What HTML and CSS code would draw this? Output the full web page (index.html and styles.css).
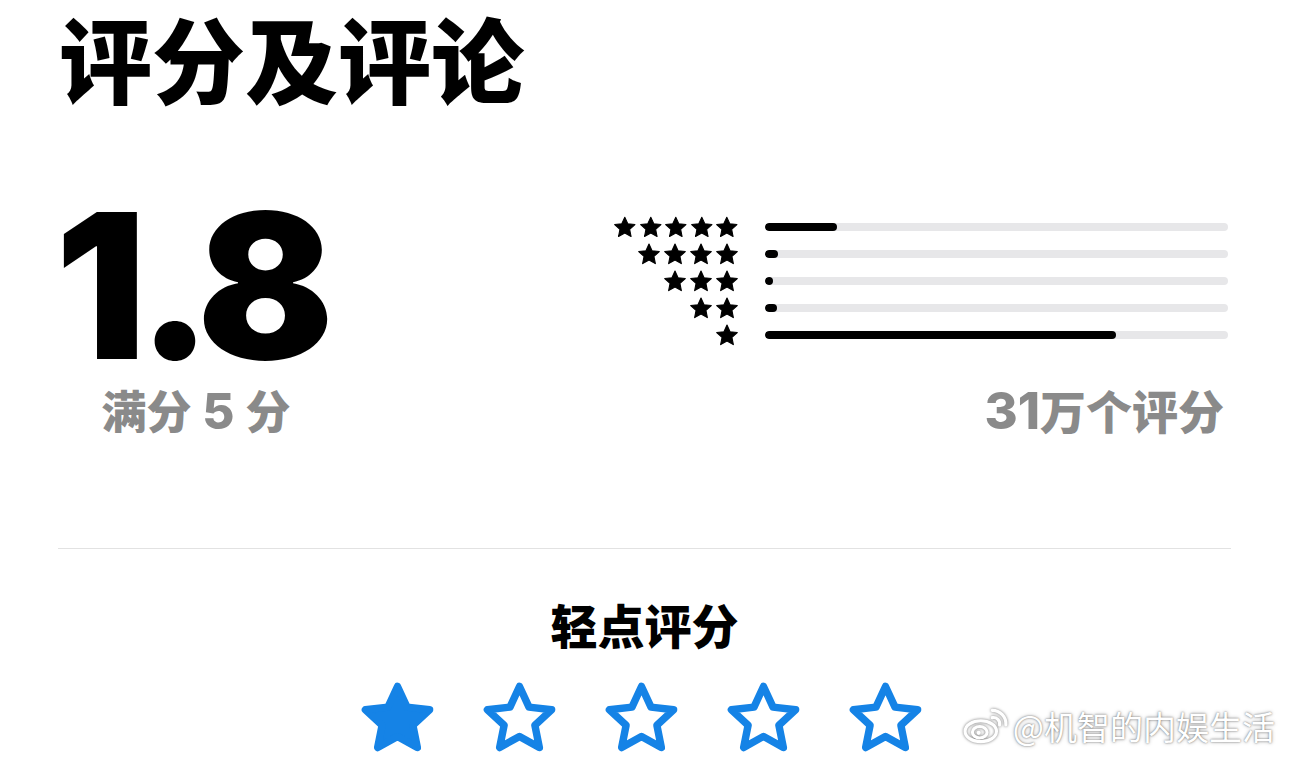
FILE: index.html
```html
<!DOCTYPE html>
<html lang="zh-CN">
<head>
  <meta charset="UTF-8" />
  <meta name="viewport" content="width=device-width, initial-scale=1" />
  <title>评分及评论</title>
  <link rel="stylesheet" href="styles.css">
</head>
<body>
  <svg width="0" height="0" class="defs">
    <defs>
      <path id="star" d="M12 2.8 L14.82 8.92 L21.51 9.71 L16.56 14.28 L17.88 20.89 L12 17.6 L6.12 20.89 L7.44 14.28 L2.49 9.71 L9.18 8.92 Z" />
    </defs>
  </svg>

  <main class="page">
    <h1 class="title">评分及评论</h1>

    <section class="summary">
      <div class="score">
        <div class="score-value">1.8</div>
        <div class="caption">满分 <span class="num">5</span> 分</div>
      </div>

      <div class="breakdown">
        <div class="histogram">
          <div class="hist-row">
            <div class="hist-stars">
              <svg class="mini-star" viewBox="0 0 24 24"><use href="#star" /></svg>
              <svg class="mini-star" viewBox="0 0 24 24"><use href="#star" /></svg>
              <svg class="mini-star" viewBox="0 0 24 24"><use href="#star" /></svg>
              <svg class="mini-star" viewBox="0 0 24 24"><use href="#star" /></svg>
              <svg class="mini-star" viewBox="0 0 24 24"><use href="#star" /></svg>
            </div>
            <div class="bar"><div class="bar-fill" style="width: 15.6%"></div></div>
          </div>
          <div class="hist-row">
            <div class="hist-stars">
              <svg class="mini-star" viewBox="0 0 24 24"><use href="#star" /></svg>
              <svg class="mini-star" viewBox="0 0 24 24"><use href="#star" /></svg>
              <svg class="mini-star" viewBox="0 0 24 24"><use href="#star" /></svg>
              <svg class="mini-star" viewBox="0 0 24 24"><use href="#star" /></svg>
            </div>
            <div class="bar"><div class="bar-fill" style="width: 2.8%"></div></div>
          </div>
          <div class="hist-row">
            <div class="hist-stars">
              <svg class="mini-star" viewBox="0 0 24 24"><use href="#star" /></svg>
              <svg class="mini-star" viewBox="0 0 24 24"><use href="#star" /></svg>
              <svg class="mini-star" viewBox="0 0 24 24"><use href="#star" /></svg>
            </div>
            <div class="bar"><div class="bar-fill" style="width: 1.8%"></div></div>
          </div>
          <div class="hist-row">
            <div class="hist-stars">
              <svg class="mini-star" viewBox="0 0 24 24"><use href="#star" /></svg>
              <svg class="mini-star" viewBox="0 0 24 24"><use href="#star" /></svg>
            </div>
            <div class="bar"><div class="bar-fill" style="width: 2.6%"></div></div>
          </div>
          <div class="hist-row">
            <div class="hist-stars">
              <svg class="mini-star" viewBox="0 0 24 24"><use href="#star" /></svg>
            </div>
            <div class="bar"><div class="bar-fill" style="width: 75.8%"></div></div>
          </div>
        </div>
        <div class="caption count"><span class="num">31</span>万个评分</div>
      </div>
    </section>

    <hr class="divider" />

    <section class="tap-rate">
      <h2 class="tap-title">轻点评分</h2>
      <div class="rate-stars">
        <svg class="rate-star filled" viewBox="0 0 24 24"><use href="#star" /></svg>
        <svg class="rate-star" viewBox="0 0 24 24"><use href="#star" /></svg>
        <svg class="rate-star" viewBox="0 0 24 24"><use href="#star" /></svg>
        <svg class="rate-star" viewBox="0 0 24 24"><use href="#star" /></svg>
        <svg class="rate-star" viewBox="0 0 24 24"><use href="#star" /></svg>
      </div>
    </section>
  </main>

  <div class="watermark">
    <svg class="weibo" viewBox="0 0 44 36">
      <ellipse cx="17" cy="23" rx="15" ry="10" fill="none" stroke="#fff" stroke-width="3" />
      <ellipse cx="16" cy="24" rx="7" ry="5.5" fill="none" stroke="#fff" stroke-width="3" />
      <circle cx="15" cy="24.5" r="2" fill="#fff" />
      <path d="M28 10 a6 6 0 0 1 7 7" fill="none" stroke="#fff" stroke-width="3" stroke-linecap="round" />
      <path d="M28 3 a13 13 0 0 1 13 14" fill="none" stroke="#fff" stroke-width="3" stroke-linecap="round" />
    </svg>
    <span>@机智的内娱生活</span>
  </div>
</body>
</html>
```

FILE: styles.css
```css
:root {
  --text: #000;
  --muted: #8a8a8a;
  --track: #e7e7e9;
  --blue: #1583e6;
  --font-family: "Inter", "Noto Sans CJK SC", sans-serif;
}

* { box-sizing: border-box; }

body {
  margin: 0;
  background: #fff;
  color: var(--text);
  font-family: var(--font-family);
  overflow: hidden;
}

.defs { position: absolute; }

.page {
  padding: 17px 59px 0;
}

.title {
  margin: 0;
  font-size: 93px;
  font-weight: 900;
  line-height: 1;
}

/* score + histogram */

.summary {
  display: grid;
  grid-template-columns: 1fr 618px;
  margin-top: 84px;
}

.score {
  justify-self: start;
  display: flex;
  flex-direction: column;
  align-items: center;
}

.score-value {
  font-size: 202px;
  font-weight: 900;
  line-height: 184px;
  letter-spacing: -9px;
  margin-left: -4px;
}

.caption {
  font-size: 45px;
  font-weight: 800;
  line-height: 1.45;
  color: var(--muted);
}

.caption .num {
  font-size: 1.1em;
  line-height: 1;
}

.score .caption {
  margin-top: 2px;
  margin-left: 8px;
  word-spacing: 1px;
}

.breakdown {
  display: flex;
  flex-direction: column;
}

.histogram {
  margin-top: 19px;
  height: 166px;
}

.hist-row {
  display: grid;
  grid-template-columns: 128px 1fr;
  gap: 25px;
  align-items: center;
  height: 27px;
}

.hist-stars {
  display: flex;
  justify-content: flex-end;
}

.mini-star {
  width: 26px;
  height: 26px;
  fill: #000;
  stroke: #000;
  stroke-width: 1;
  stroke-linejoin: round;
}

.bar {
  height: 8px;
  margin-right: 2px;
  border-radius: 4px;
  background: var(--track);
  overflow: hidden;
}

.bar-fill {
  height: 100%;
  min-width: 8px;
  border-radius: 4px;
  background: #000;
}

.count {
  align-self: flex-end;
  margin-right: 6px;
  font-size: 46px;
}

.divider {
  margin: 102px -1px 0;
  border: none;
  border-top: 1px solid #e2e2e2;
}

/* tap to rate */

.tap-rate {
  display: flex;
  flex-direction: column;
  align-items: center;
}

.tap-title {
  margin: 54px 0 0;
  font-size: 47px;
  font-weight: 800;
  line-height: 1;
}

.rate-stars {
  display: flex;
  gap: 41px;
  margin-top: 27px;
  margin-right: 6px;
}

.rate-star {
  width: 81px;
  height: 81px;
  fill: none;
  stroke: var(--blue);
  stroke-width: 2.2;
  stroke-linejoin: round;
}

.rate-star.filled {
  fill: var(--blue);
}

/* weibo watermark */

.watermark {
  position: absolute;
  right: 14px;
  bottom: 9px;
  display: flex;
  align-items: center;
  gap: 4px;
  color: #fff;
  font-family: "Noto Sans CJK SC", sans-serif;
  font-size: 33px;
  text-shadow: 0 0 2px rgba(0,0,0,0.55), 0 0 4px rgba(0,0,0,0.25);
}

.weibo {
  width: 46px;
  height: 38px;
  filter: drop-shadow(0 0 1.5px rgba(0,0,0,0.55));
}
```
